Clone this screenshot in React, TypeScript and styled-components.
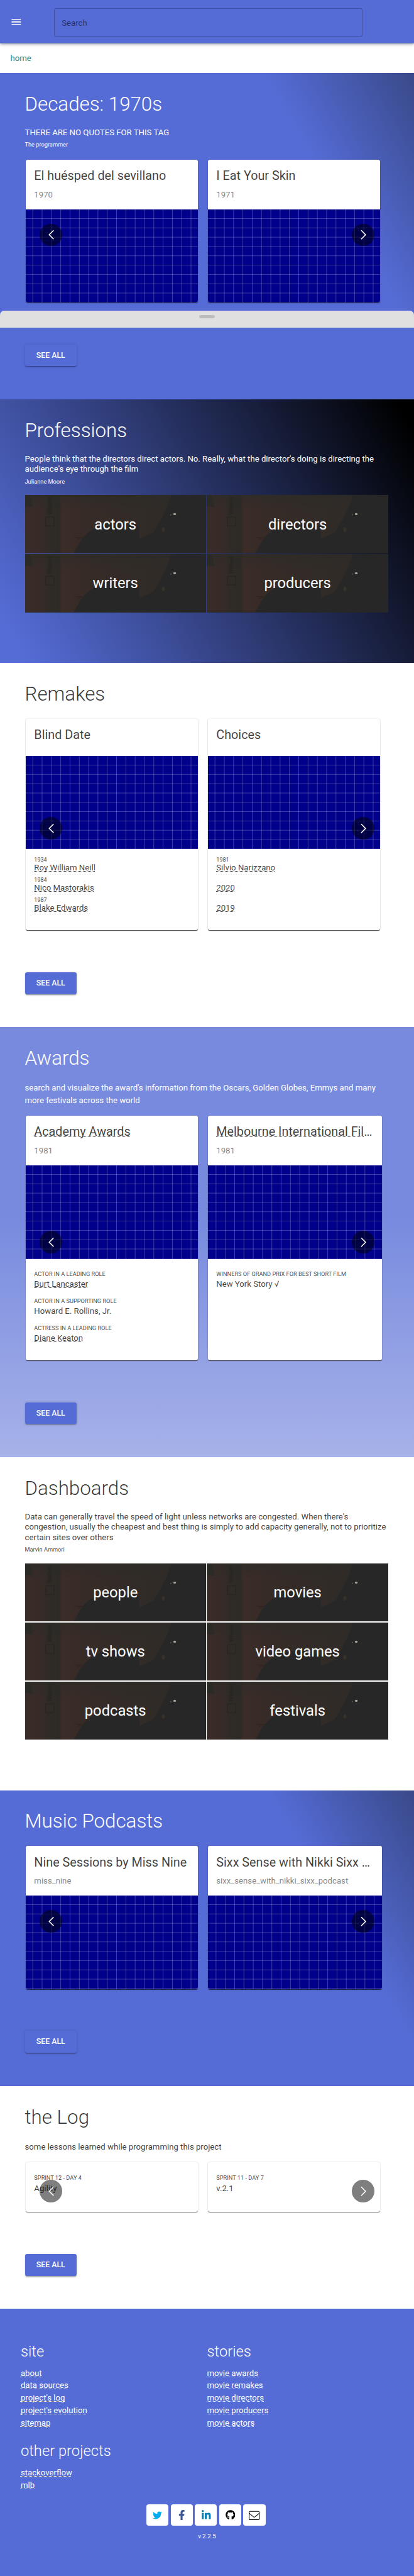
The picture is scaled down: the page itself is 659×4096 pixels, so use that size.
import React from 'react';
import styled, { createGlobalStyle, css } from 'styled-components';
import { FaTwitter, FaFacebookF, FaLinkedinIn, FaGithub } from 'react-icons/fa';

const blue = '#556cd6';

const GlobalStyle = createGlobalStyle`
  *, *::before, *::after { box-sizing: border-box; }
  html, body { margin: 0; padding: 0; background: ${blue}; overflow-x: hidden; }
  h1, h2, h3, p, ul { margin: 0; padding: 0; font-weight: inherit; }
`;

const Page = styled.div`
  zoom: 0.82375;
  width: 800px;
  height: 4972.5px;
  overflow: hidden;
  position: relative;
  background: #fff;
  font-family: Roboto, "Liberation Sans", sans-serif;
  font-size: 16px;
  font-weight: 400;
  color: rgba(0, 0, 0, 0.78);
`;

const TopBar = styled.header`
  position: relative;
  z-index: 1;
  height: 84px;
  display: flex;
  align-items: center;
  padding: 4px 20px 0;
  background: ${blue};
  box-shadow: 0 2px 4px -1px rgba(0, 0, 0, 0.2), 0 4px 5px 0 rgba(0, 0, 0, 0.14),
    0 1px 10px 0 rgba(0, 0, 0, 0.12);
`;

const MenuIcon = styled.svg`
  width: 24px;
  height: 24px;
  margin: -4px 60px 0 0;
  fill: #fff;
`;

const SearchBox = styled.div`
  width: 596px;
  height: 56px;
  padding: 0 14px;
  display: flex;
  align-items: center;
  border: 1px solid rgba(0, 0, 0, 0.25);
  border-radius: 4px;
  color: rgba(0, 0, 0, 0.54);
`;

const Crumbs = styled.nav`
  height: 57px;
  padding: 0 20px;
  display: flex;
  align-items: center;
  color: #2b857c;
`;

type Tone = 'glow' | 'night' | 'plain' | 'fade';

const tones = {
  glow: css`
    background: linear-gradient(60deg, ${blue} 75%, #394989 100%);
    color: #fff;
  `,
  night: css`
    background: linear-gradient(60deg, ${blue} 5%, #000 97%);
    color: #fff;
  `,
  plain: css`
    background: #fff;
  `,
  fade: css`
    background: linear-gradient(180deg, #778ade 0%, #778ade 44%, #a7b2e9 100%);
    color: #fff;
  `,
};

const Section = styled.section<{ $tone: Tone; $height: number }>`
  height: ${(p) => p.$height}px;
  padding: 37px 48px 0;
  ${(p) => tones[p.$tone]}
`;

const Title = styled.h2`
  font-size: 38px;
  line-height: 46px;
  font-weight: 300;
`;

const Quote = styled.p`
  margin-top: 22px;
  line-height: 20px;
  white-space: pre;
`;

const Author = styled.p`
  margin-top: 5px;
  font-size: 11.2px;
  line-height: 16px;
`;

const Description = styled.p`
  margin-top: 22px;
  line-height: 24px;
  white-space: pre;
`;

const CarouselFrame = styled.div<{ $top: number }>`
  position: relative;
  margin: ${(p) => p.$top}px 2px 0;
  display: flex;
  gap: 20px;
`;

const ArrowButton = styled.button<{ $side: 'left' | 'right' }>`
  position: absolute;
  ${(p) => p.$side}: 27px;
  top: calc(50% - 14px);
  width: 43px;
  height: 43px;
  padding: 0;
  border: 0;
  border-radius: 50%;
  background: rgba(0, 0, 0, 0.5);
  display: flex;
  align-items: center;
  justify-content: center;

  svg {
    width: 20px;
    height: 20px;
    fill: none;
    stroke: #fff;
    stroke-width: 1.9;
  }
`;

const CardFrame = styled.article<{ $wide?: boolean; $edge: number }>`
  flex: none;
  width: ${(p) => (p.$wide ? 336 : 332)}px;
  border-radius: 4px;
  overflow: hidden;
  background: #fff;
  color: rgba(0, 0, 0, 0.75);
  box-shadow: 0 2px 1px -1px rgba(0, 0, 0, ${(p) => p.$edge}),
    0 1px 1px 0 rgba(0, 0, 0, 0.14), 0 1px 3px 0 rgba(0, 0, 0, 0.12);
`;

const CardHeader = styled.div<{ $height: number }>`
  height: ${(p) => p.$height}px;
  padding: 16px 16px 0;
`;

const CardTitle = styled.h3`
  font-size: 24px;
  line-height: 32px;
  white-space: nowrap;
  overflow: hidden;
  text-overflow: ellipsis;
`;

const CardSubtitle = styled.p`
  margin-top: 8px;
  line-height: 24px;
  color: rgba(0, 0, 0, 0.5);
`;

const Underlined = styled.span`
  text-decoration: underline dotted 1px;
  text-underline-offset: 1.5px;
  text-decoration-skip-ink: none;
`;

const Media = styled.div<{ $offset: number }>`
  height: 180px;
  background-color: #00008b;
  background-image: linear-gradient(90deg, rgba(255, 255, 255, 0.24) 1.4px, transparent 1.4px),
    linear-gradient(rgba(255, 255, 255, 0.24) 1.4px, transparent 1.4px);
  background-size: 18px 18px;
  background-position: ${(p) => p.$offset}px 17px;
`;

const RemakeList = styled.ul`
  height: 157px;
  padding: 14px 16px 0;
  list-style: none;
`;

const RemakeItem = styled.li`
  height: 39px;
`;

const RemakeYear = styled.p`
  height: 14px;
  font-size: 11px;
  line-height: 14px;
`;

const RemakeName = styled.p`
  line-height: 16px;
`;

const FactList = styled.ul<{ $height: number }>`
  height: ${(p) => p.$height}px;
  padding: 21px 16px 0;
  list-style: none;
`;

const Fact = styled.li`
  height: 52px;
`;

const FactLabel = styled.p`
  font-size: 11.2px;
  line-height: 16px;
  text-transform: uppercase;
`;

const FactValue = styled.p<{ $gap: number }>`
  margin-top: ${(p) => p.$gap}px;
  line-height: 20px;
`;

const SeeAll = styled.button`
  display: block;
  margin-top: 81px;
  width: 100px;
  height: 42px;
  padding: 0;
  border: 0;
  border-radius: 4px;
  background: ${blue};
  color: #fff;
  font: 500 15px/42px Roboto, "Liberation Sans", sans-serif;
  box-shadow: 0 3px 1px -2px rgba(0, 0, 0, 0.2), 0 2px 2px 0 rgba(0, 0, 0, 0.14),
    0 1px 5px 0 rgba(0, 0, 0, 0.12);
`;

const TileGrid = styled.div`
  margin-top: 19px;
  display: grid;
  grid-template-columns: 350px 350px;
  grid-auto-rows: 112px;
  gap: 2px;
`;

const TileFrame = styled.a`
  position: relative;
  display: flex;
  align-items: center;
  justify-content: center;
  overflow: hidden;
  background: #272727;
  color: #fff;
  font-size: 28.8px;
`;

const TilePicture = styled.svg`
  position: absolute;
  inset: 0;
  width: 350px;
  height: 112px;
`;

const TileLabel = styled.span`
  position: relative;
`;

const Footer = styled.footer`
  height: 516px;
  padding: 65px 40px 0;
  background: ${blue};
  color: #fff;
`;

const FooterGrid = styled.div`
  display: grid;
  grid-template-columns: 360px 360px;
  row-gap: 25.5px;
`;

const FooterHeading = styled.h3`
  font-size: 28.8px;
  line-height: 34px;
  font-weight: 300;
  margin-bottom: 13px;
`;

const FooterLink = styled.li`
  list-style: none;
  line-height: 24px;
`;

const Socials = styled.div`
  margin: 24.5px 0 0 3px;
  padding-right: 7px;
  display: flex;
  justify-content: center;
  gap: 4px;
`;

const Social = styled.a<{ $color: string; $size: number }>`
  width: 42.8px;
  height: 42px;
  border-radius: 5px;
  background: #fff;
  color: ${(p) => p.$color};
  display: flex;
  align-items: center;
  justify-content: center;

  svg {
    width: ${(p) => p.$size}px;
    height: ${(p) => p.$size}px;
  }
`;

const Version = styled.p`
  margin-top: 10.5px;
  font-size: 12px;
  line-height: 20px;
  text-align: center;
`;

const Sheet = styled.div`
  position: absolute;
  left: 0;
  top: 600px;
  width: 800px;
  height: 32px;
  padding-top: 8px;
  border-radius: 8px 8px 0 0;
  background: #e0e0e0;
`;

const SheetHandle = styled.div`
  width: 30px;
  height: 6px;
  margin: 0 auto;
  border-radius: 3px;
  background: #bdbdbd;
`;

function Arrows() {
  return (
    <>
      <ArrowButton $side="left" aria-label="previous">
        <svg viewBox="0 0 20 20"><path d="M15 1.5 6.500 10 15 18.500" /></svg>
      </ArrowButton>
      <ArrowButton $side="right" aria-label="next">
        <svg viewBox="0 0 20 20"><path d="M6 1.5 14.500 10 6 18.500" /></svg>
      </ArrowButton>
    </>
  );
}

interface CardProps {
  title: string;
  subtitle?: string;
  wide?: boolean;
  linked?: boolean;
  edge?: number;
  children?: React.ReactNode;
}

function Card({ title, subtitle, wide, linked, edge = 0.6, children }: CardProps) {
  return (
    <CardFrame $wide={wide} $edge={edge}>
      <CardHeader $height={subtitle ? 96 : 72}>
        <CardTitle>{linked ? <Underlined>{title}</Underlined> : title}</CardTitle>
        {subtitle && <CardSubtitle>{subtitle}</CardSubtitle>}
      </CardHeader>
      <Media $offset={wide ? 15 : 13} />
      {children}
    </CardFrame>
  );
}

function Remakes({ items }: { items: [string, string][] }) {
  return (
    <RemakeList>
      {items.map(([year, name]) => (
        <RemakeItem key={name}>
          <RemakeYear>{year}</RemakeYear>
          <RemakeName><Underlined>{name}</Underlined></RemakeName>
        </RemakeItem>
      ))}
    </RemakeList>
  );
}

interface FactData {
  label: string;
  value: string;
  linked?: boolean;
}

function Facts({ items, height, gap }: { items: FactData[]; height: number; gap: number }) {
  return (
    <FactList $height={height}>
      {items.map((f) => (
        <Fact key={f.label}>
          <FactLabel>{f.label}</FactLabel>
          <FactValue $gap={gap}>{f.linked ? <Underlined>{f.value}</Underlined> : f.value}</FactValue>
        </Fact>
      ))}
    </FactList>
  );
}

function Tiles({ labels }: { labels: string[] }) {
  return (
    <TileGrid>
      {labels.map((label) => (
        <TileFrame key={label}>
          <TilePicture viewBox="0 0 350 112">
            <defs>
              <linearGradient id="wall" x1="0" x2="1" y1="0" y2="0">
                <stop offset="0" stopColor="#3a2c28" />
                <stop offset="0.12" stopColor="#372b27" />
                <stop offset="0.15" stopColor="#302b26" />
                <stop offset="0.235" stopColor="#2d2a26" />
                <stop offset="0.25" stopColor="#3b2c27" />
                <stop offset="0.5" stopColor="#352b27" />
                <stop offset="0.75" stopColor="#322b27" />
                <stop offset="1" stopColor="#302b28" />
              </linearGradient>
              <linearGradient id="shade" x1="0" x2="0" y1="0" y2="1">
                <stop offset="0" stopColor="#2b2b27" stopOpacity="0.6" />
                <stop offset="0.35" stopColor="#2b2b27" stopOpacity="0" />
              </linearGradient>
            </defs>
            <path d="M0 0H282L275 22 262 48 248 72 221 85 220 62Q190 50 150 56 118 70 106 90L94 112H0Z" fill="url(#wall)" />
            <path d="M0 0H282L275 22 262 48 248 72 221 85 220 62H0Z" fill="url(#shade)" />
            <path d="M0 0H8L12 8 15 23 9 23 3 21 0 24Z" fill="#2c2a26" />
            <rect x="40" y="43" width="16" height="17" fill="#302b26" stroke="#292723" strokeWidth="2" />
            <text transform="translate(51 38) rotate(-90)" fontSize="10" fontWeight="500" fill="#252421">Wildern</text>
            <path d="M96 82H109M101 86 111 82" stroke="#33241f" strokeWidth="1.5" />
            <ellipse cx="289" cy="37" rx="2.6" ry="2" fill="#aaa89c" />
            <circle cx="281.500" cy="38.500" r="1.200" fill="#5c5b53" />
            <ellipse cx="267" cy="67" rx="3" ry="4.500" fill="#383129" />
          </TilePicture>
          <TileLabel>{label}</TileLabel>
        </TileFrame>
      ))}
    </TileGrid>
  );
}

function FooterColumn({ heading, links }: { heading: string; links: string[] }) {
  return (
    <div>
      <FooterHeading>{heading}</FooterHeading>
      <ul>
        {links.map((link) => (
          <FooterLink key={link}><Underlined>{link}</Underlined></FooterLink>
        ))}
      </ul>
    </div>
  );
}

export default function App() {
  return (
    <>
      <GlobalStyle />
      <Page>
        <TopBar>
          <MenuIcon viewBox="0 0 24 24"><path d="M3 18h18v-2H3v2zm0-5h18v-2H3v2zm0-7v2h18V6H3z" /></MenuIcon>
          <SearchBox>Search</SearchBox>
        </TopBar>
        <Crumbs>home</Crumbs>

        <Section $tone="glow" $height={630}>
          <Title>Decades: 1970s</Title>
          <Quote>THERE ARE NO QUOTES FOR THIS TAG</Quote>
          <Author>The programmer</Author>
          <CarouselFrame $top={21}>
            <Card title="El huésped del sevillano" subtitle="1970" />
            <Card title="I Eat Your Skin" subtitle="1971" />
            <Arrows />
          </CarouselFrame>
          <SeeAll>SEE ALL</SeeAll>
        </Section>

        <Section $tone="night" $height={509}>
          <Title>Professions</Title>
          <Quote>
            {"People think that the directors direct actors. No. Really, what the director's doing is directing the\naudience's eye through the film"}
          </Quote>
          <Author>Julianne Moore</Author>
          <Tiles labels={['actors', 'directors', 'writers', 'producers']} />
        </Section>

        <Section $tone="plain" $height={703}>
          <Title>Remakes</Title>
          <CarouselFrame $top={24}>
            <Card title="Blind Date">
              <Remakes items={[['1934', 'Roy William Neill'], ['1984', 'Nico Mastorakis'], ['1987', 'Blake Edwards']]} />
            </Card>
            <Card title="Choices">
              <Remakes items={[['1981', 'Silvio Narizzano'], ['', '2020'], ['', '2019']]} />
            </Card>
            <Arrows />
          </CarouselFrame>
          <SeeAll>SEE ALL</SeeAll>
        </Section>

        <Section $tone="fade" $height={830}>
          <Title>Awards</Title>
          <Description>
            {"search and visualize the award's information from the Oscars, Golden Globes, Emmys and many\nmore festivals across the world"}
          </Description>
          <CarouselFrame $top={18}>
            <Card title="Academy Awards" subtitle="1981" linked>
              <Facts
                height={196}
                gap={2.5}
                items={[
                  { label: 'Actor in a leading role', value: 'Burt Lancaster', linked: true },
                  { label: 'Actor in a supporting role', value: 'Howard E. Rollins, Jr.' },
                  { label: 'Actress in a leading role', value: 'Diane Keaton', linked: true },
                ]}
              />
            </Card>
            <Card title="Melbourne International Film Festival" subtitle="1981" linked wide>
              <Facts
                height={196}
                gap={2.5}
                items={[{ label: 'Winners of Grand Prix for Best Short Film', value: 'New York Story √' }]}
              />
            </Card>
            <Arrows />
          </CarouselFrame>
          <SeeAll>SEE ALL</SeeAll>
        </Section>

        <Section $tone="plain" $height={643}>
          <Title>Dashboards</Title>
          <Quote>
            {"Data can generally travel the speed of light unless networks are congested. When there's\ncongestion, usually the cheapest and best thing is simply to add capacity generally, not to prioritize\ncertain sites over others"}
          </Quote>
          <Author>Marvin Ammori</Author>
          <Tiles labels={['people', 'movies', 'tv shows', 'video games', 'podcasts', 'festivals']} />
        </Section>

        <Section $tone="glow" $height={571}>
          <Title>Music Podcasts</Title>
          <CarouselFrame $top={24.5}>
            <Card title="Nine Sessions by Miss Nine" subtitle="miss_nine" />
            <Card title="Sixx Sense with Nikki Sixx Podcast" subtitle="sixx_sense_with_nikki_sixx_podcast" wide />
            <Arrows />
          </CarouselFrame>
          <SeeAll>SEE ALL</SeeAll>
        </Section>

        <Section $tone="plain" $height={430}>
          <Title>the Log</Title>
          <Description>some lessons learned while programming this project</Description>
          <CarouselFrame $top={18}>
            <CardFrame $edge={0.35}>
              <Facts height={96} gap={4.5} items={[{ label: 'Sprint 12 - Day 4', value: 'Agility' }]} />
            </CardFrame>
            <CardFrame $edge={0.35}>
              <Facts height={96} gap={4.5} items={[{ label: 'Sprint 11 - Day 7', value: 'v.2.1' }]} />
            </CardFrame>
            <Arrows />
          </CarouselFrame>
          <SeeAll>SEE ALL</SeeAll>
        </Section>

        <Footer>
          <FooterGrid>
            <FooterColumn heading="site" links={['about', 'data sources', "project's log", "project's evolution", 'sitemap']} />
            <FooterColumn
              heading="stories"
              links={['movie awards', 'movie remakes', 'movie directors', 'movie producers', 'movie actors']}
            />
            <FooterColumn heading="other projects" links={['stackoverflow', 'mlb']} />
          </FooterGrid>
          <Socials>
            <Social $color="#00aced" $size={18}><FaTwitter /></Social>
            <Social $color="#3b5998" $size={20}><FaFacebookF /></Social>
            <Social $color="#007bb6" $size={20}><FaLinkedinIn /></Social>
            <Social $color="#000" $size={19}><FaGithub /></Social>
            <Social $color="#000" $size={21}>
              <svg viewBox="0 0 21 21" fill="none" stroke="currentColor" strokeWidth="1.3">
                <rect x="0.700" y="2.700" width="19.600" height="16" rx="1.500" />
                <path d="M1 6.500 9 13.300Q10.500 14.500 12 13.300L20 6.500" />
              </svg>
            </Social>
          </Socials>
          <Version>v.2.2.5</Version>
        </Footer>

        <Sheet>
          <SheetHandle />
        </Sheet>
      </Page>
    </>
  );
}
